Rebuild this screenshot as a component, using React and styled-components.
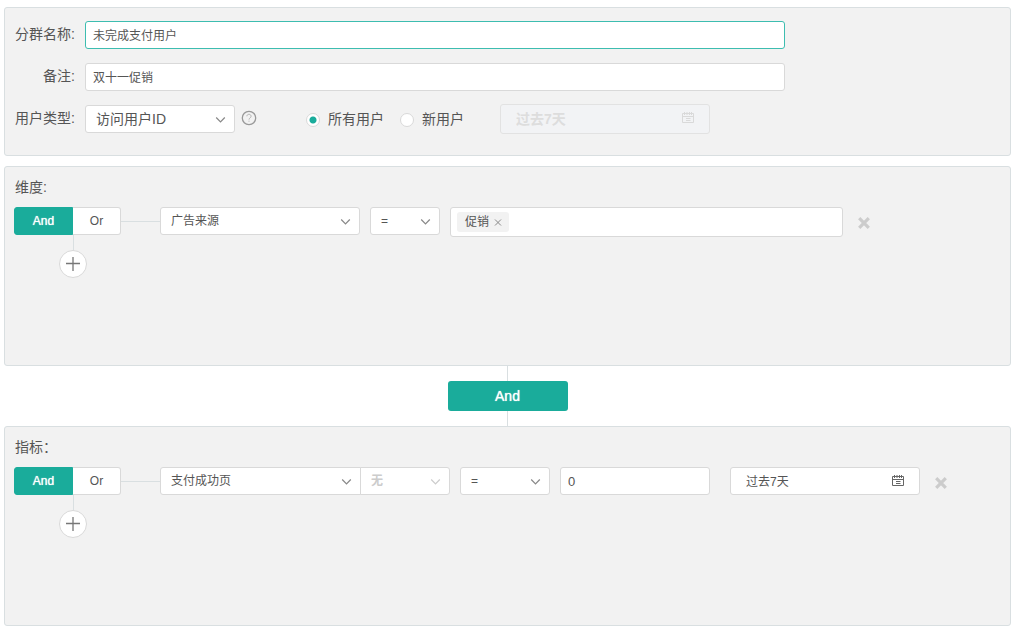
import React, { useState } from 'react';
import styled, { createGlobalStyle } from 'styled-components';

const GlobalStyle = createGlobalStyle`
  * {
    box-sizing: border-box;
  }

  body {
    margin: 0;
    background: #fff;
    color: #555;
    font-family: "Liberation Sans", "Noto Sans CJK SC", sans-serif;
    font-size: 14px;
    line-height: 20px;
  }

  button,
  input,
  select {
    margin: 0;
    color: inherit;
    font-family: inherit;
  }
`;

// Styled Components
const Page = styled.main`
  padding: 7px 8px 7px 4px;
`;

const Panel = styled.section`
  border: 1px solid #d9dfe1;
  border-radius: 3px;
  background: #f2f2f2;
`;

const InfoPanel = styled(Panel)`
  display: flex;
  flex-direction: column;
  gap: 14px;
  margin-bottom: 10px;
  padding: 13px 10px 22px;
`;

const RulePanel = styled(Panel)`
  min-height: 200px;
  padding: 10px 9px;
`;

const FormRow = styled.div`
  display: flex;
  align-items: center;
  height: 28px;
`;

const FormLabel = styled.label`
  flex: none;
  width: 60px;
  margin-right: 10px;
  padding-bottom: 2px;
  text-align: right;
  white-space: nowrap;
`;

const TextInput = styled.input`
  flex: 0 1 ${(props) => props.$width}px;
  min-width: 0;
  height: 28px;
  padding: 0 7px 2px;
  border: 1px solid #d9d9d9;
  border-radius: 3px;
  background: #fff;
  font-size: 12px;
  outline: none;

  &.active {
    border-color: #3dbdb0;
  }
`;

const NumberInput = styled(TextInput)`
  padding: 0 7px;
  font-size: 13px;
`;

const SelectBox = styled.div`
  position: relative;
  flex: 0 1 ${(props) => props.$width}px;
  min-width: 0;
  color: ${(props) => (props.$muted ? '#ccc' : '#888')};

  svg {
    position: absolute;
    top: 11px;
    right: 8px;
    pointer-events: none;
  }
`;

const Select = styled.select`
  display: block;
  width: 100%;
  height: 28px;
  padding: 0 24px 0 10px;
  border: 1px solid #d9d9d9;
  border-radius: ${(props) => props.$corners || '3px'};
  background: #fff;
  color: #555;
  font-size: ${(props) => props.$size || 12}px;
  appearance: none;
  outline: none;

  &:disabled {
    color: #ccc;
    font-weight: bold;
    opacity: 1;
  }
`;

const HelpButton = styled.button`
  display: flex;
  width: 16px;
  height: 16px;
  margin: 0 49px 2px 6px;
  padding: 0;
  border: none;
  background: none;
  color: #999;
`;

const RadioLabel = styled.label`
  display: flex;
  align-items: center;
  gap: 8px;
  margin-right: ${(props) => props.$gap}px;
  white-space: nowrap;
`;

const Radio = styled.input`
  width: 14px;
  height: 14px;
  border: 1px solid #d9d9d9;
  border-radius: 50%;
  background: #fff;
  appearance: none;

  && {
    margin-top: 2px;
  }

  &:checked {
    background: radial-gradient(circle, #1aac9b 3px, #fff 4px);
  }
`;

const DateBox = styled.div`
  position: relative;
  flex: 0 1 ${(props) => props.$width}px;
  min-width: 0;
  color: ${(props) => (props.$muted ? '#d9d9d9' : '#666')};

  svg {
    position: absolute;
    top: 8px;
    right: 16px;
    pointer-events: none;
  }
`;

const DateInput = styled.input`
  display: block;
  width: 100%;
  height: 28px;
  padding: 0 15px 2px;
  border: 1px solid #d9d9d9;
  border-radius: 3px;
  background: #fff;
  color: #555;
  font-size: 12px;
  outline: none;

  &:disabled {
    height: 30px;
    border-color: #e2e2e2;
    background: #f2f3f5;
    color: #ddd;
    font-size: 14px;
    font-weight: bold;
  }
`;

const RuleTitle = styled.h2`
  margin: 0 0 10px;
  padding-left: 1px;
  font-size: 14px;
  font-weight: normal;
  line-height: 20px;
`;

const RuleRow = styled.div`
  display: flex;
  align-items: flex-start;
  height: 28px;
`;

const Fields = styled.div`
  display: flex;
  flex: 1;
  align-items: flex-start;
  gap: 10px;
  min-width: 0;
`;

const JoinedSelects = styled.div`
  display: flex;
  flex: 0 1 290px;
  min-width: 0;

  > * + * {
    margin-left: -1px;
  }
`;

const ValueField = styled.div`
  display: flex;
  flex: 0 1 160px;
  min-width: 0;
  padding-right: 10px;
`;

const Toggle = styled.div`
  display: flex;
  flex: none;
`;

const ToggleButton = styled.button`
  width: ${(props) => (props.$first ? 59 : 48)}px;
  height: 28px;
  padding: 0;
  border: 1px solid ${(props) => (props.$active ? '#1aac9b' : '#d9d9d9')};
  border-width: ${(props) => (props.$first ? '1px' : '1px 1px 1px 0')};
  border-radius: ${(props) => (props.$first ? '3px 0 0 3px' : '0 3px 3px 0')};
  background: ${(props) => (props.$active ? '#1aac9b' : '#fff')};
  color: ${(props) => (props.$active ? '#fff' : '#555')};
  font-size: 12px;
  text-shadow: ${(props) => (props.$active ? '0 0 1px #fff' : 'none')};
  cursor: pointer;
`;

const HorizontalLine = styled.div`
  flex: none;
  width: 39px;
  height: 1px;
  margin-top: 14px;
  background: #d9dfe1;
`;

const AddBranch = styled.div`
  display: flex;
  flex-direction: column;
  align-items: center;
  width: 28px;
  margin-left: 45px;
`;

const VerticalLine = styled.div`
  width: 1px;
  height: 15px;
  background: #d9dfe1;
`;

const AddButton = styled.button`
  display: flex;
  align-items: center;
  justify-content: center;
  width: 28px;
  height: 28px;
  padding: 0;
  border: 1px solid #d9d9d9;
  border-radius: 50%;
  background: #fff;
  color: #777;
  cursor: pointer;
`;

const TagBox = styled.div`
  display: flex;
  flex: 0 1 393px;
  align-items: center;
  min-width: 0;
  height: 30px;
  padding: 0 6px;
  border: 1px solid #d9d9d9;
  border-radius: 3px;
  background: #fff;
`;

const Tag = styled.span`
  display: flex;
  flex: none;
  align-items: center;
  gap: 5px;
  height: 20px;
  padding: 0 7px 0 8px;
  border-radius: 3px;
  background: #f2f2f2;
  font-size: 12px;
`;

const TagInput = styled.input`
  flex: 1;
  min-width: 0;
  border: none;
  background: none;
  outline: none;
`;

const IconButton = styled.button`
  display: flex;
  padding: 0;
  border: none;
  background: none;
  color: ${(props) => props.$color};
  cursor: pointer;
`;

const RemoveButton = styled(IconButton)`
  && {
    margin: 10px 0 0 5px;
  }
`;

const Joiner = styled.div`
  display: flex;
  flex-direction: column;
  align-items: center;
`;

const JoinerButton = styled.button`
  width: 120px;
  height: 30px;
  padding: 0;
  border: none;
  border-radius: 3px;
  background: #1aac9b;
  color: #fff;
  font-size: 14px;
  text-shadow: 0 0 1px #fff;
  cursor: pointer;
`;

// Icons
const Chevron = () => (
  <svg width="12" height="8" viewBox="0 0 12 8" fill="none" stroke="currentColor" strokeWidth="1.2">
    <path d="M1.2 1.5 5.500 6l4.300-4.500" />
  </svg>
);

const CalendarIcon = () => (
  <svg width="12" height="11" viewBox="0 0 12 11" fill="none" stroke="currentColor">
    <path d="M.5 1.500h11v9H.5zM.5 4.500h11M2.500 0v3M5 0v3M7.500 0v3M9.500 0v3" />
    <path d="M4 6.500h4.500M4 8.500h4.500" />
  </svg>
);

const HelpIcon = () => (
  <svg width="16" height="16" viewBox="0 0 16 16" fill="none" stroke="currentColor">
    <circle cx="8" cy="8" r="6.700" strokeWidth="1.3" />
    <path d="M5.900 6.300c0-2.800 4.200-2.600 4.200 0 0 1.500-2.100 1.700-2.100 3.300M8 10.700v1" strokeWidth=".7" />
  </svg>
);

const PlusIcon = () => (
  <svg width="14" height="14" viewBox="0 0 14 14" stroke="currentColor" strokeWidth="1.3">
    <path d="M7 0v14M0 6.500h14" />
  </svg>
);

const CloseIcon = () => (
  <svg width="12" height="12" viewBox="0 0 12 12" stroke="currentColor" strokeWidth="3.2">
    <path d="m1.200 1.200 9.600 9.600M10.800 1.200l-9.600 9.600" />
  </svg>
);

const SmallCloseIcon = () => (
  <svg width="8" height="8" viewBox="0 0 8 8" stroke="currentColor">
    <path d="m1 1.500 6 6M7 1.500l-6 6" />
  </svg>
);

const SelectField = ({ width, size, corners, disabled, options, ...rest }) => (
  <SelectBox $width={width} $muted={disabled}>
    <Select $size={size} $corners={corners} disabled={disabled} {...rest}>
      {options.map((option) => (
        <option key={option}>{option}</option>
      ))}
    </Select>
    <Chevron />
  </SelectBox>
);

const AndOrToggle = () => {
  const [mode, setMode] = useState('And');

  return (
    <Toggle>
      <ToggleButton type="button" $first $active={mode === 'And'} onClick={() => setMode('And')}>
        And
      </ToggleButton>
      <ToggleButton type="button" $active={mode === 'Or'} onClick={() => setMode('Or')}>
        Or
      </ToggleButton>
    </Toggle>
  );
};

const RuleGroup = ({ title, children }) => (
  <RulePanel>
    <RuleTitle>{title}</RuleTitle>
    <RuleRow>
      <AndOrToggle />
      <HorizontalLine />
      <Fields>{children}</Fields>
    </RuleRow>
    <AddBranch>
      <VerticalLine />
      <AddButton type="button" aria-label="添加">
        <PlusIcon />
      </AddButton>
    </AddBranch>
  </RulePanel>
);

const App = () => {
  const [name, setName] = useState('未完成支付用户');
  const [remark, setRemark] = useState('双十一促销');
  const [userScope, setUserScope] = useState('all');
  const [tags, setTags] = useState(['促销']);
  const [amount, setAmount] = useState('0');

  const removeTag = (tag) => {
    setTags((prevTags) => prevTags.filter((item) => item !== tag));
  };

  return (
    <Page>
      <GlobalStyle />
      <InfoPanel>
        <FormRow>
          <FormLabel htmlFor="name">分群名称:</FormLabel>
          <TextInput
            id="name"
            className="active"
            $width={700}
            value={name}
            onChange={(e) => setName(e.target.value)}
          />
        </FormRow>
        <FormRow>
          <FormLabel htmlFor="remark">备注:</FormLabel>
          <TextInput id="remark" $width={700} value={remark} onChange={(e) => setRemark(e.target.value)} />
        </FormRow>
        <FormRow>
          <FormLabel htmlFor="userType">用户类型:</FormLabel>
          <SelectField id="userType" width={150} size={14} options={['访问用户ID']} />
          <HelpButton type="button" aria-label="帮助">
            <HelpIcon />
          </HelpButton>
          <RadioLabel $gap={16}>
            <Radio type="radio" name="scope" checked={userScope === 'all'} onChange={() => setUserScope('all')} />
            所有用户
          </RadioLabel>
          <RadioLabel $gap={36}>
            <Radio type="radio" name="scope" checked={userScope === 'new'} onChange={() => setUserScope('new')} />
            新用户
          </RadioLabel>
          <DateBox $width={210} $muted={userScope === 'all'}>
            <DateInput aria-label="新用户时间" value="过去7天" disabled={userScope === 'all'} readOnly />
            <CalendarIcon />
          </DateBox>
        </FormRow>
      </InfoPanel>

      <RuleGroup title="维度:">
        <SelectField aria-label="维度" width={200} options={['广告来源']} />
        <SelectField aria-label="条件" width={70} options={['=']} />
        <TagBox>
          {tags.map((tag) => (
            <Tag key={tag}>
              {tag}
              <IconButton type="button" $color="#888" aria-label="移除" onClick={() => removeTag(tag)}>
                <SmallCloseIcon />
              </IconButton>
            </Tag>
          ))}
          <TagInput aria-label="维度值" />
        </TagBox>
        <RemoveButton type="button" $color="#ccc" aria-label="删除">
          <CloseIcon />
        </RemoveButton>
      </RuleGroup>

      <Joiner>
        <VerticalLine />
        <JoinerButton type="button">And</JoinerButton>
        <VerticalLine />
      </Joiner>

      <RuleGroup title="指标：">
        <JoinedSelects>
          <SelectField aria-label="指标" width={201} corners="3px 0 0 3px" options={['支付成功页']} />
          <SelectField aria-label="属性" width={90} corners="0 3px 3px 0" options={['无']} disabled />
        </JoinedSelects>
        <SelectField aria-label="条件" width={90} options={['=']} />
        <ValueField>
          <NumberInput
            aria-label="数值"
            $width={150}
            value={amount}
            onChange={(e) => setAmount(e.target.value)}
          />
        </ValueField>
        <DateBox $width={190}>
          <DateInput aria-label="时间" value="过去7天" readOnly />
          <CalendarIcon />
        </DateBox>
        <RemoveButton type="button" $color="#ccc" aria-label="删除">
          <CloseIcon />
        </RemoveButton>
      </RuleGroup>
    </Page>
  );
};

export default App;
